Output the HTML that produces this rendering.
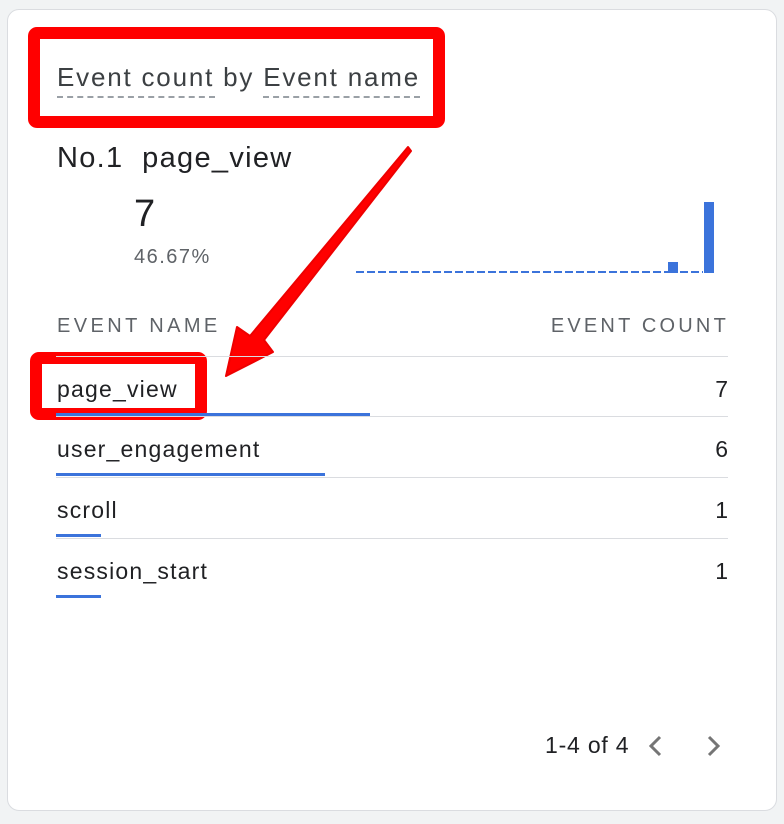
<!DOCTYPE html>
<html><head><style>
body{margin:0;width:784px;height:824px;background:#f1f3f4;font-family:"Liberation Sans",Roboto,sans-serif;position:relative;overflow:hidden}
.card{position:absolute;left:7px;top:9px;width:768px;height:800px;background:#fff;border:1px solid #dadce0;border-radius:12px}
.a{position:absolute;white-space:nowrap}
.t{color:#3c4043;font-size:26px;letter-spacing:1.8px}
.hr{position:absolute;left:56px;width:672px;height:1px;background:#dadce0}
.bar{position:absolute;left:56px;height:3px;background:#3b73db}
.row{position:absolute;left:57px;font-size:23px;color:#202124;letter-spacing:1.2px}
.val{position:absolute;right:56px;font-size:23px;color:#202124}
.hd{font-size:20px;letter-spacing:3.4px;color:#5f6368}
</style></head><body>
<div class="card"></div>
<div class="a t" style="left:57px;top:62px">Event count by Event name</div>
<div class="a" style="left:57px;top:96px;width:158px;border-top:2px dashed #9aa0a6"></div>
<div class="a" style="left:263px;top:96px;width:157px;border-top:2px dashed #9aa0a6"></div>
<div class="a" style="left:57px;top:142px;font-size:29px;letter-spacing:1.3px;color:#202124">No.1&nbsp; page_view</div>
<div class="a" style="left:134px;top:193px;font-size:38px;color:#202124">7</div>
<div class="a" style="left:134px;top:246px;font-size:20px;letter-spacing:1.5px;color:#5f6368">46.67%</div>
<svg class="a" style="left:0;top:0" width="784" height="824">
<line x1="356" y1="272" x2="668" y2="272" stroke="#3b73db" stroke-width="2" stroke-dasharray="8,3"/>
<line x1="680" y1="272" x2="703" y2="272" stroke="#3b73db" stroke-width="2" stroke-dasharray="8,3"/>
<rect x="668" y="262" width="10" height="11" fill="#3b73db"/>
<rect x="704" y="202" width="10" height="71" fill="#3b73db"/>
<path d="M660 737 L651 746 L660 755" fill="none" stroke="#757575" stroke-width="3"/>
<path d="M709 737 L718 746 L709 755" fill="none" stroke="#757575" stroke-width="3"/>
<path d="M408 147 L411 151 L264 340 L273 352 L226 376 L237 327 L250 336 Z" fill="#f00" stroke="#e00" stroke-width="2" stroke-linejoin="round"/>
<rect x="34" y="33" width="405" height="89" fill="none" stroke="#f00" stroke-width="12" rx="3"/>
<rect x="36" y="358" width="165" height="56" fill="none" stroke="#f00" stroke-width="12" rx="3"/>
</svg>
<div class="a hd" style="left:57px;top:315px">EVENT NAME</div>
<div class="a hd" style="right:55px;top:315px;letter-spacing:3.2px">EVENT COUNT</div>
<div class="hr" style="top:356px"></div>
<div class="row" style="top:376px">page_view</div><div class="val" style="top:376px">7</div>
<div class="bar" style="top:413px;width:314px"></div>
<div class="hr" style="top:416px"></div>
<div class="row" style="top:436px">user_engagement</div><div class="val" style="top:436px">6</div>
<div class="bar" style="top:473px;width:269px"></div>
<div class="hr" style="top:477px"></div>
<div class="row" style="top:497px">scroll</div><div class="val" style="top:497px">1</div>
<div class="bar" style="top:534px;width:45px"></div>
<div class="hr" style="top:538px"></div>
<div class="row" style="top:558px">session_start</div><div class="val" style="top:558px">1</div>
<div class="bar" style="top:595px;width:45px"></div>
<div class="a" style="left:545px;top:732px;font-size:23px;letter-spacing:0.8px;color:#202124">1-4 of 4</div>
</body></html>
